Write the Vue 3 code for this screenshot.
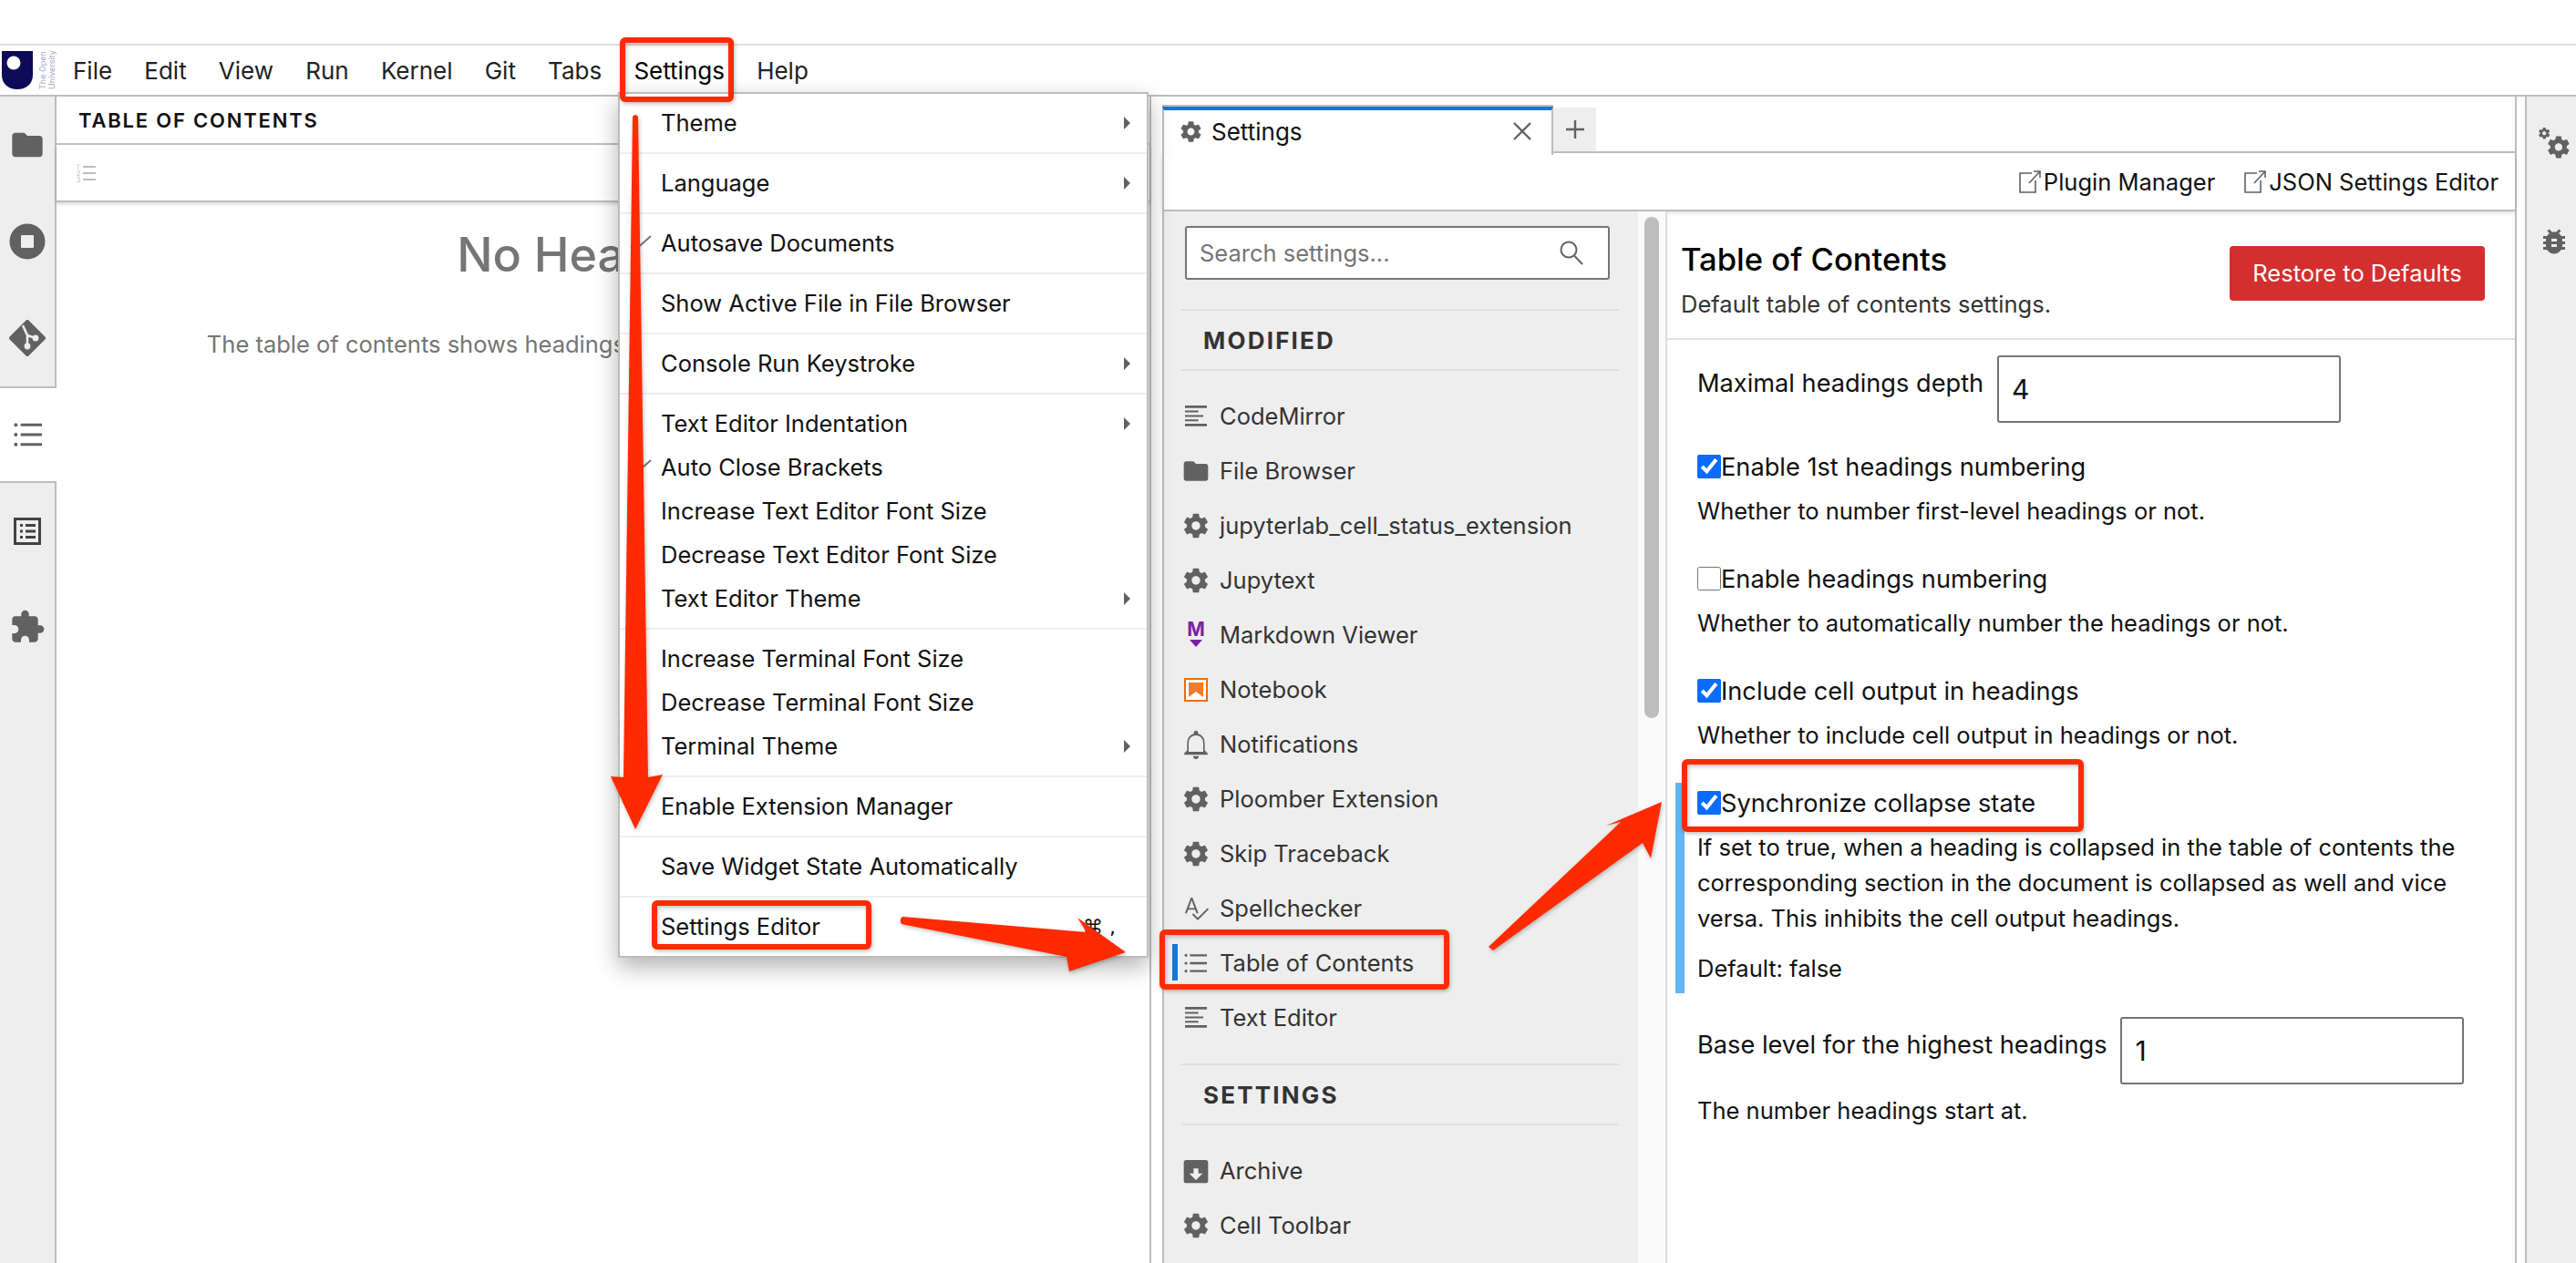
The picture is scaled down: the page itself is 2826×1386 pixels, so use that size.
<script setup>
const menus = ["File", "Edit", "View", "Run", "Kernel", "Git", "Tabs", "Settings", "Help"];

const d = {
  gear: "M19.43 12.98c.04-.32.07-.64.07-.98s-.03-.66-.07-.98l2.11-1.65c.19-.15.24-.42.12-.64l-2-3.46c-.12-.22-.39-.3-.61-.22l-2.49 1c-.52-.4-1.08-.73-1.69-.98l-.38-2.65C14.46 2.18 14.25 2 14 2h-4c-.25 0-.46.18-.49.42l-.38 2.65c-.61.25-1.17.59-1.69.98l-2.49-1c-.23-.09-.49 0-.61.22l-2 3.46c-.13.22-.07.49.12.64l2.11 1.65c-.04.32-.07.65-.07.98s.03.66.07.98l-2.11 1.65c-.19.15-.24.42-.12.64l2 3.46c.12.22.39.3.61.22l2.49-1c.52.4 1.08.73 1.69.98l.38 2.65c.03.24.24.42.49.42h4c.25 0 .46-.18.49-.42l.38-2.65c.61-.25 1.17-.59 1.69-.98l2.49 1c.23.09.49 0 .61-.22l2-3.46c.12-.22.07-.49-.12-.64l-2.11-1.65zM12 15.5c-1.93 0-3.5-1.57-3.5-3.5s1.57-3.5 3.5-3.5 3.5 1.57 3.5 3.5-1.57 3.5-3.5 3.5z",
  folder: "M10 4H4c-1.1 0-1.99.9-1.99 2L2 18c0 1.1.9 2 2 2h16c1.1 0 2-.9 2-2V8c0-1.1-.9-2-2-2h-8l-2-2z",
  puzzle: "M20.5 11H19V7c0-1.1-.9-2-2-2h-4V3.5C13 2.12 11.88 1 10.5 1S8 2.12 8 3.5V5H4c-1.1 0-1.99.9-1.99 2v3.8H3.5c1.49 0 2.7 1.21 2.7 2.7s-1.21 2.7-2.7 2.7H2V20c0 1.1.9 2 2 2h3.8v-1.5c0-1.49 1.21-2.7 2.7-2.7 1.49 0 2.7 1.21 2.7 2.7V22H17c1.1 0 2-.9 2-2v-4h1.5c1.38 0 2.5-1.12 2.5-2.5S21.88 11 20.5 11z",
  bug: "M20 8h-2.81c-.45-.78-1.07-1.45-1.82-1.96L17 4.41 15.59 3l-2.17 2.17C12.96 5.06 12.49 5 12 5s-.96.06-1.41.17L8.41 3 7 4.41l1.62 1.63C7.88 6.55 7.26 7.22 6.81 8H4v2h2.09c-.05.33-.09.66-.09 1v1H4v2h2v1c0 .34.04.67.09 1H4v2h2.81c1.04 1.79 2.97 3 5.19 3s4.15-1.21 5.19-3H20v-2h-2.09c.05-.33.09-.66.09-1v-1h2v-2h-2v-1c0-.34-.04-.67-.09-1H20V8zm-6 8h-4v-2h4v2zm0-4h-4v-2h4v2z",
  editor: "M3 3h18v2H3zM3 7.2h11v1.5H3zM3 10.8h15v1.5H3zM3 14.4h11v1.5H3zM3 18h18v2H3z",
  toc: "M7 4.6h14v1.8H7zM7 11.1h14v1.8H7zM7 17.6h14v1.8H7zM5 5.5a1.2 1.2 0 1 1-2.4 0a1.2 1.2 0 1 1 2.4 0zM5 12a1.2 1.2 0 1 1-2.4 0a1.2 1.2 0 1 1 2.4 0zM5 18.5a1.2 1.2 0 1 1-2.4 0a1.2 1.2 0 1 1 2.4 0z",
  bell: "M12 22c1.1 0 2-.9 2-2h-4c0 1.1.9 2 2 2zm6-6v-5c0-3.07-1.63-5.64-4.5-6.32V4c0-.83-.67-1.5-1.5-1.5s-1.5.67-1.5 1.5v.68C7.64 5.36 6 7.92 6 11v5l-2 2v1h16v-1l-2-2zm-1 1H7v-6c0-2.9 1.8-5.2 5-5.2s5 2.3 5 5.2v6z",
  spell: "M12.45 16h1.6L9.2 3H7.8L2.9 16h1.6l1.12-3h5.7l1.13 3zm-6.3-4.4L8.5 5.3l2.35 6.3h-4.7zm15.44-.01l-8.09 8.09L9.83 16l-1 1 4.68 4.7L22.6 12.6l-1.01-1.01z",
  archive: "M4 3h16a2 2 0 0 1 2 2v15a2 2 0 0 1-2 2H4a2 2 0 0 1-2-2V5a2 2 0 0 1 2-2zM10 10v4H6.5l5.5 5.5 5.5-5.5H14v-4z",
};

const menuRows = [
  { label: "Theme", sub: true }, { sep: true },
  { label: "Language", sub: true }, { sep: true },
  { label: "Autosave Documents", check: true }, { sep: true },
  { label: "Show Active File in File Browser" }, { sep: true },
  { label: "Console Run Keystroke", sub: true }, { sep: true },
  { label: "Text Editor Indentation", sub: true },
  { label: "Auto Close Brackets", check: true },
  { label: "Increase Text Editor Font Size" },
  { label: "Decrease Text Editor Font Size" },
  { label: "Text Editor Theme", sub: true }, { sep: true },
  { label: "Increase Terminal Font Size" },
  { label: "Decrease Terminal Font Size" },
  { label: "Terminal Theme", sub: true }, { sep: true },
  { label: "Enable Extension Manager" }, { sep: true },
  { label: "Save Widget State Automatically" }, { sep: true },
  { label: "Settings Editor", keys: "⌘ ," },
];

const modified = [
  { label: "CodeMirror", icon: "editor" },
  { label: "File Browser", icon: "folder" },
  { label: "jupyterlab_cell_status_extension", icon: "gear" },
  { label: "Jupytext", icon: "gear" },
  { label: "Markdown Viewer", kind: "markdown" },
  { label: "Notebook", kind: "notebook" },
  { label: "Notifications", icon: "bell", box: "3 2 18 20" },
  { label: "Ploomber Extension", icon: "gear" },
  { label: "Skip Traceback", icon: "gear" },
  { label: "Spellchecker", icon: "spell" },
  { label: "Table of Contents", icon: "toc", active: true },
  { label: "Text Editor", icon: "editor" },
];

const others = [
  { label: "Archive", icon: "archive" },
  { label: "Cell Toolbar", icon: "gear" },
];

const checkFields = [
  { label: "Enable 1st headings numbering", desc: "Whether to number first-level headings or not.", on: true },
  { label: "Enable headings numbering", desc: "Whether to automatically number the headings or not.", on: false },
  { label: "Include cell output in headings", desc: "Whether to include cell output in headings or not.", on: true },
];
</script>

<template>
  <div class="page">
    <div class="blank"></div>

    <header class="menubar">
      <svg class="logo" width="62" height="46" viewBox="0 0 62 46">
        <path d="M2 2h34v26c0 10-7 16-17 16S2 38 2 28z" fill="#0b0b57" />
        <circle cx="15" cy="15" r="7.5" fill="#fff" />
        <g fill="#9fa8c9" font-size="9" font-family="Inter, sans-serif">
          <text transform="translate(50 44) rotate(-90)">The Open</text>
          <text transform="translate(60 44) rotate(-90)">University</text>
        </g>
      </svg>
      <span v-for="m in menus" :key="m" class="menu-title" :class="{ open: m === 'Settings' }">{{ m }}</span>
    </header>

    <div class="workspace">
      <nav class="sidebar">
        <div class="side-tab">
          <svg width="40" height="40" viewBox="0 0 24 24"><path :d="d.folder" /></svg>
        </div>
        <div class="side-tab">
          <svg width="40" height="40" viewBox="0 0 40 40"><path fill-rule="evenodd" d="M20 .5a19.5 19.5 0 1 1 0 39a19.5 19.5 0 1 1 0-39zM14 13a1 1 0 0 0-1 1v12a1 1 0 0 0 1 1h12a1 1 0 0 0 1-1V14a1 1 0 0 0-1-1z" /></svg>
        </div>
        <div class="side-tab">
          <svg width="40" height="40" viewBox="0 0 40 40">
            <path d="M20 2L38 20L20 38L2 20z" stroke="#616161" stroke-width="4" stroke-linejoin="round" />
            <path d="M15 6L20 17V29M20 17L29 20" stroke="#eee" stroke-width="2.6" fill="none" />
            <circle cx="20" cy="29" r="3.4" fill="#eee" />
            <circle cx="29" cy="20" r="3.4" fill="#eee" />
          </svg>
        </div>
        <div class="side-tab active">
          <svg width="40" height="40" viewBox="0 0 24 24"><path :d="d.toc" /></svg>
        </div>
        <div class="side-tab">
          <svg width="30" height="30" viewBox="0 0 30 30">
            <rect x="1.5" y="1.5" width="27" height="27" fill="#eee" stroke="#424242" stroke-width="3" />
            <path d="M7 7h3v3H7zM7 13.5h3v3H7zM7 20h3v3H7zM13 7h11v3H13zM13 13.5h11v3H13zM13 20h11v3H13z" fill="#424242" />
          </svg>
        </div>
        <div class="side-tab last">
          <svg width="40" height="40" viewBox="0 0 24 24"><path :d="d.puzzle" /></svg>
        </div>
      </nav>

      <section class="toc-panel">
        <div class="toc-head">TABLE OF CONTENTS</div>
        <div class="toc-tools">
          <svg width="24" height="24" viewBox="0 0 24 24">
            <path d="M8 4h14v2H8zM8 11h14v2H8zM8 18h14v2H8z" fill="#bdbdbd" />
            <g font-size="7" fill="#bdbdbd" font-family="Inter, sans-serif">
              <text x="1" y="8">1</text>
              <text x="1" y="15">2</text>
              <text x="1" y="22">3</text>
            </g>
          </svg>
        </div>
        <div class="toc-empty">
          <h1>No Headings</h1>
          <p>The table of contents shows headings in notebooks and supported files.</p>
        </div>
      </section>

      <main class="dock">
        <div class="tabbar">
          <div class="tab">
            <svg width="27" height="27" viewBox="0 0 24 24"><path fill-rule="evenodd" :d="d.gear" /></svg>
            <span class="tab-label">Settings</span>
            <svg class="tab-close" width="22" height="22" viewBox="0 0 22 22"><path d="M2 2L20 20M20 2L2 20" /></svg>
          </div>
          <div class="tab-add">
            <svg width="22" height="22" viewBox="0 0 22 22"><path d="M11 1V21M1 11H21" /></svg>
          </div>
          <div class="tab-rest"></div>
        </div>

        <div class="editor-tools">
          <span class="tool-link">
            <svg width="27" height="27" viewBox="0 0 27 27"><path d="M15 4H2v21h17V12M12 15L24 2M17 2h7v7" /></svg>Plugin Manager
          </span>
          <span class="tool-link">
            <svg width="27" height="27" viewBox="0 0 27 27"><path d="M15 4H2v21h17V12M12 15L24 2M17 2h7v7" /></svg>JSON Settings Editor
          </span>
        </div>

        <div class="settings">
          <aside class="plugin-col">
            <div class="plugin-list">
              <div class="search">
                <span>Search settings...</span>
                <svg width="30" height="30" viewBox="0 0 30 30"><circle cx="12" cy="11" r="8.5" /><path d="M18 17.5L27 27" /></svg>
              </div>

              <h3 class="group-title">MODIFIED</h3>
              <ul class="plugins">
                <li v-for="p in modified" :key="p.label" :class="{ active: p.active }">
                  <svg v-if="p.kind === 'markdown'" width="32" height="32" viewBox="0 0 32 32">
                    <text x="16" y="17" text-anchor="middle" font-size="21" font-weight="700" fill="#7b1fa2" font-family="Inter, sans-serif">M</text>
                    <path d="M9 21h14l-7 8z" fill="#7b1fa2" />
                  </svg>
                  <svg v-else-if="p.kind === 'notebook'" width="32" height="32" viewBox="0 0 32 32">
                    <rect x="4" y="4" width="24" height="24" fill="#fff" stroke="#ef6c00" stroke-width="2" />
                    <path d="M8 8h16v16l-8-6-8 6z" fill="#f37b2a" />
                  </svg>
                  <svg v-else width="32" height="32" :viewBox="p.box || '0 0 24 24'"><path fill-rule="evenodd" :d="d[p.icon]" /></svg>
                  <span>{{ p.label }}</span>
                </li>
              </ul>

              <h3 class="group-title">SETTINGS</h3>
              <ul class="plugins">
                <li v-for="p in others" :key="p.label">
                  <svg width="32" height="32" viewBox="0 0 24 24"><path fill-rule="evenodd" :d="d[p.icon]" /></svg>
                  <span>{{ p.label }}</span>
                </li>
              </ul>
            </div>
            <div class="scroll"><div class="thumb"></div></div>
          </aside>

          <div class="form-col">
            <div class="form-head">
              <div class="form-title">
                <h2>Table of Contents</h2>
                <p>Default table of contents settings.</p>
              </div>
              <button class="restore" type="button">Restore to Defaults</button>
            </div>

            <div class="form-body">
              <div class="field input-field first">
                <label>Maximal headings depth</label>
                <input type="text" value="4" />
              </div>

              <div v-for="f in checkFields" :key="f.label" class="field">
                <label class="check"><input type="checkbox" :checked="f.on" />{{ f.label }}</label>
                <p>{{ f.desc }}</p>
              </div>

              <div class="field changed">
                <label class="check"><input type="checkbox" checked />Synchronize collapse state</label>
                <p>If set to true, when a heading is collapsed in the table of contents the corresponding section in the document is collapsed as well and vice versa. This inhibits the cell output headings.</p>
                <p class="default">Default: false</p>
              </div>

              <div class="field input-field">
                <label>Base level for the highest headings</label>
                <input type="text" value="1" />
              </div>
              <div class="field last"><p>The number headings start at.</p></div>
            </div>
          </div>
        </div>
      </main>

      <nav class="rightbar">
        <svg class="gears" width="36" height="36" viewBox="0 0 36 36">
          <path fill-rule="evenodd" :d="d.gear" transform="scale(.62) translate(-2 -2)" />
          <path fill-rule="evenodd" :d="d.gear" transform="translate(7.5 7) scale(1.2)" />
        </svg>
        <svg class="bug" width="36" height="36" viewBox="0 0 24 24"><path :d="d.bug" /></svg>
      </nav>
    </div>

    <!-- dropdown sits over the panels -->
    <div class="dropdown">
      <template v-for="(row, i) in menuRows" :key="i">
        <div v-if="row.sep" class="sep"></div>
        <div v-else class="row">
          <span class="slot">
            <svg v-if="row.check" width="24" height="18" viewBox="0 0 24 18"><path d="M1 12L5 17L23 1" /></svg>
          </span>
          <span class="row-label">{{ row.label }}</span>
          <span v-if="row.keys" class="keys">{{ row.keys }}</span>
          <span v-if="row.sub" class="caret"></span>
        </div>
      </template>
    </div>

    <!-- red callouts drawn on top of the screenshot -->
    <svg class="marks" width="2826" height="1386" viewBox="0 0 2826 1386">
      <g fill="none" stroke="#ff2a00" stroke-width="6">
        <rect x="683" y="44" width="119" height="65" rx="3" />
        <rect x="718" y="991" width="235" height="48" rx="3" />
        <rect x="1275" y="1023" width="312" height="60" rx="3" />
        <rect x="1848" y="836" width="435" height="74" rx="3" />
      </g>
      <g fill="#ff2a00">
        <path d="M694 128Q697 124 700 128L711 853L727 850L697 910L670 852L684 853z" />
        <path d="M990 1006L1192 1023L1182 1007L1235 1045L1173 1066L1170 1050L989 1014Q986 1009 990 1006z" />
        <path d="M1633 1039L1778 902L1762 906L1823 880L1811 942L1802 925L1638 1043z" />
      </g>
    </svg>
  </div>
</template>

<style>
html,
body {
  margin: 0;
  background: #fff;
}
</style>

<style scoped>
.page {
  position: relative;
  width: 2826px;
  height: 1386px;
  overflow: hidden;
  background: #fff;
  font-family: Inter, "Liberation Sans", sans-serif;
  font-size: 25.5px;
  color: #111;
}

.blank {
  height: 48px;
  border-bottom: 2px solid #e0e0e0;
}

.menubar {
  display: flex;
  align-items: center;
  height: 54px;
  border-bottom: 2px solid #bdbdbd;
  color: #222;
  font-size: 26px;
}

.logo {
  flex: none;
}

.menu-title {
  padding: 0 17.6px;
  white-space: nowrap;
}

.menu-title:first-of-type {
  padding-left: 18px;
}

.menu-title.open {
  color: #000;
}

.workspace {
  display: flex;
  height: 1280px;
}

.sidebar {
  display: flex;
  flex-direction: column;
  width: 62px;
  flex: none;
}

.side-tab {
  display: flex;
  align-items: center;
  justify-content: center;
  box-sizing: border-box;
  height: 106px;
  width: 62px;
  background: #eee;
  border-right: 2px solid #bdbdbd;
}

.side-tab svg {
  fill: #616161;
}

.side-tab.active {
  background: #fff;
  border-right: 0;
  border-top: 2px solid #bdbdbd;
  border-bottom: 2px solid #bdbdbd;
}

.side-tab.last {
  flex: 1;
  align-items: flex-start;
  padding-top: 32px;
}

.toc-panel {
  width: 1199px;
  flex: none;
  border-right: 2px solid #bdbdbd;
}

.toc-head {
  display: flex;
  align-items: center;
  height: 51px;
  padding-left: 24px;
  border-bottom: 2px solid #c4c4c4;
  font-size: 22px;
  font-weight: 600;
  letter-spacing: 1.8px;
}

.toc-tools {
  display: flex;
  align-items: center;
  height: 61px;
  padding-left: 21px;
  border-bottom: 2px solid #bdbdbd;
  box-shadow: 0 2px 4px rgba(0, 0, 0, 0.16);
}

.toc-empty {
  text-align: center;
  color: #757575;
}

.toc-empty h1 {
  margin: 26px 0 0;
  font-size: 52px;
  font-weight: 500;
  line-height: 64px;
}

.toc-empty p {
  margin: 48px 0 0;
  line-height: 36px;
}

.dock {
  width: 1486px;
  margin-left: 12px;
  flex: none;
  box-sizing: border-box;
  border-right: 2px solid #bdbdbd;
}

.tabbar {
  display: flex;
  height: 62px;
}

.tab {
  display: flex;
  align-items: center;
  width: 409px;
  height: 46px;
  margin-top: 11px;
  padding-left: 16px;
  padding-bottom: 3px;
  border-left: 2px solid #bdbdbd;
  border-right: 2px solid #bdbdbd;
  border-top: 4px solid #1976d2;
  gap: 9px;
  box-shadow: 0 -2px 0 #bdbdbd;
  font-size: 26px;
}

.tab svg {
  fill: #616161;
}

.tab-label {
  flex: 1;
}

.tab-close {
  margin-right: 21px;
}

.tab-close path,
.tab-add path {
  stroke: #616161;
  stroke-width: 2.4;
  fill: none;
}

.tab-add {
  display: flex;
  align-items: center;
  justify-content: center;
  width: 47px;
  height: 48px;
  margin-top: 12px;
  background: #eee;
  border-bottom: 2px solid #bdbdbd;
}

.tab-rest {
  flex: 1;
  border-bottom: 2px solid #bdbdbd;
}

.editor-tools {
  display: flex;
  align-items: center;
  justify-content: flex-end;
  gap: 31px;
  height: 62px;
  padding-right: 18px;
  border-left: 2px solid #bdbdbd;
  border-bottom: 2px solid #bdbdbd;
  box-shadow: 0 2px 4px rgba(0, 0, 0, 0.12);
}

.tool-link {
  display: flex;
  align-items: center;
  gap: 1px;
}

.tool-link svg {
  fill: none;
  stroke: #616161;
  stroke-width: 1.6;
}

.settings {
  display: flex;
  height: 1154px;
  border-left: 2px solid #bdbdbd;
}

.plugin-col {
  display: flex;
  width: 550px;
  flex: none;
  border-right: 2px solid #ddd;
}

.plugin-list {
  width: 520px;
  flex: none;
  box-sizing: border-box;
  padding: 16px 21px 0 19px;
  background: #eee;
  overflow: hidden;
}

.search {
  display: flex;
  align-items: center;
  justify-content: space-between;
  box-sizing: border-box;
  width: 466px;
  height: 59px;
  margin-left: 4px;
  padding: 0 25px 0 14px;
  background: #fff;
  border: 2px solid #757575;
  border-radius: 3px;
  color: #757575;
}

.search svg {
  fill: none;
  stroke: #616161;
  stroke-width: 2;
}

.group-title {
  display: flex;
  align-items: center;
  height: 64px;
  margin: 32px 0 0;
  padding-left: 24px;
  border-top: 2px solid #e0e0e0;
  border-bottom: 2px solid #e0e0e0;
  font-size: 26px;
  font-weight: 700;
  letter-spacing: 2.2px;
  color: #333;
}

.plugins + .group-title {
  margin-top: 0;
}

.plugins {
  margin: 0;
  padding: 20px 0;
  list-style: none;
}

.plugins li {
  position: relative;
  display: flex;
  align-items: center;
  gap: 10px;
  height: 60px;
  color: #333;
  white-space: nowrap;
}

.plugins li span {
  margin-top: -2px;
}

.plugins li svg {
  flex: none;
  fill: #616161;
}

.plugins li.active::before {
  content: "";
  position: absolute;
  left: -10px;
  top: 9px;
  width: 6px;
  height: 40px;
  background: #1976d2;
}

.scroll {
  flex: 1;
  background: #fafafa;
}

.thumb {
  width: 16px;
  height: 550px;
  margin: 6px 0 0 7px;
  border-radius: 8px;
  background: #bdbdbd;
}

.form-col {
  flex: 1;
}

.form-head {
  display: flex;
  align-items: center;
  justify-content: space-between;
  height: 139px;
  padding: 0 33px 0 15px;
  border-bottom: 2px solid #e0e0e0;
}

.form-title {
  padding-top: 10px;
}

.form-head h2 {
  margin: 0;
  font-size: 34.6px;
  font-weight: 500;
  line-height: 44px;
  color: #000;
}

.form-head p {
  margin: 10px 0 0;
  line-height: 36px;
  color: #333;
}

.restore {
  width: 280px;
  height: 60px;
  margin-bottom: 4px;
  border: 0;
  border-radius: 4px;
  background: #d32f2f;
  color: #fff;
  font: inherit;
}

.form-body {
  padding-top: 17px;
}

.field {
  margin: 0 0 33px 9px;
  padding: 2px 0 0 14px;
  border-left: 10px solid transparent;
  color: #111;
}

.field p {
  margin: 9px 0 0;
  max-width: 850px;
  line-height: 39px;
}

.field label {
  display: flex;
  align-items: center;
  height: 40px;
  font-size: 27.2px;
  white-space: nowrap;
}

.check input {
  width: 26px;
  height: 26px;
  margin: 0;
  flex: none;
  accent-color: #0b6bff;
}

.changed {
  margin-bottom: 26px;
  padding-bottom: 7px;
  border-left-color: #64b5f6;
}

.changed .default {
  margin-top: 16px;
  line-height: 40px;
}

.input-field {
  display: flex;
  align-items: flex-start;
  gap: 15px;
  padding-top: 0;
}

.input-field label {
  margin-top: 10px;
}

.input-field input {
  box-sizing: border-box;
  width: 377px;
  height: 74px;
  padding: 0 0 0 14px;
  border: 2px solid #757575;
  border-radius: 3px;
  font: inherit;
  font-size: 30px;
  color: #111;
}

.input-field.first {
  margin-bottom: 26px;
}

.input-field:not(.first) {
  margin-bottom: 0;
}

.field.last {
  padding-top: 0;
}

.rightbar {
  flex: 1;
  margin-left: 9px;
  background: #eee;
  border-left: 2px solid #bdbdbd;
}

.rightbar svg {
  fill: #616161;
  display: block;
}

.gears {
  margin: 34px 0 0 13px;
}

.bug {
  margin: 71px 0 0 12px;
}

.dropdown {
  position: absolute;
  left: 678px;
  top: 101px;
  box-sizing: border-box;
  width: 582px;
  padding: 8px 0;
  background: #fff;
  border: 2px solid #bdbdbd;
  box-shadow: 0 10px 24px rgba(0, 0, 0, 0.3);
}

.row {
  display: flex;
  align-items: center;
  height: 48px;
  color: #111;
}

.slot {
  display: flex;
  justify-content: center;
  width: 45px;
  flex: none;
}

.slot svg {
  fill: none;
  stroke: #757575;
  stroke-width: 2;
}

.row-label {
  flex: 1;
  margin-top: -2px;
}

.keys {
  margin-right: 34px;
  font-family: "DejaVu Sans", sans-serif;
  font-size: 22px;
}

.caret {
  width: 0;
  height: 0;
  margin-right: 18px;
  border-top: 7px solid transparent;
  border-bottom: 7px solid transparent;
  border-left: 7px solid #616161;
}

.sep {
  height: 2px;
  margin: 8px 0;
  background: #eee;
}

.marks {
  position: absolute;
  left: 0;
  top: 0;
  filter: drop-shadow(1px 2px 2px rgba(0, 0, 0, 0.25));
  pointer-events: none;
}
</style>
